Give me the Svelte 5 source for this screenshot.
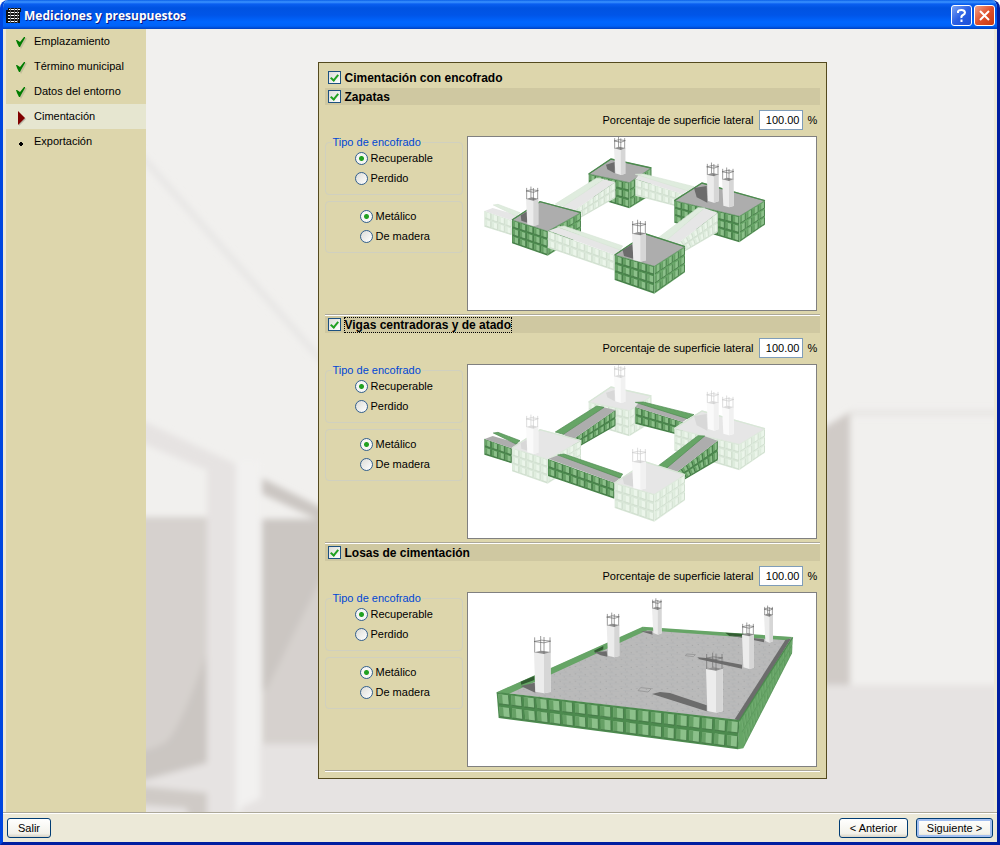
<script>
  const steps = [
    { name: "Emplazamiento", state: "done" },
    { name: "Término municipal", state: "done" },
    { name: "Datos del entorno", state: "done" },
    { name: "Cimentación", state: "current" },
    { name: "Exportación", state: "pending" },
  ];

  let allEnabled = true;
  let sections = [
    { id: "zapatas", title: "Zapatas", drawing: "footings" },
    { id: "vigas", title: "Vigas centradoras y de atado", drawing: "beams" },
    { id: "losas", title: "Losas de cimentación", drawing: "slab" },
  ].map((s) => ({
    ...s,
    enabled: true,
    percent: "100.00",
    type: "recuperable",
    material: "metalico",
  }));

  const pts = (list) => list.map((p) => p.join(",")).join(" ");

  const mix = (a, b, t) => [a[0] + (b[0] - a[0]) * t, a[1] + (b[1] - a[1]) * t];

  // Splits a quad (top left, top right, bottom right, bottom left) into inset panels
  function panels(quad, cols, rows) {
    const [a, b, c, d] = quad;
    const at = (u, v) => mix(mix(a, b, u), mix(d, c, u), v);
    const out = [];
    for (let r = 0; r < rows; r++) {
      for (let i = 0; i < cols; i++) {
        const u0 = (i + 0.12) / cols;
        const u1 = (i + 0.92) / cols;
        const um = (i + 0.42) / cols;
        const v0 = (r + 0.1) / rows;
        const v1 = (r + 0.86) / rows;
        out.push({
          cell: pts([at(u0, v0), at(u1, v0), at(u1, v1), at(u0, v1)]),
          dark: pts([at(u0, v0), at(um, v0), at(um, v1), at(u0, v1)]),
          edge: pts([at(u0, v1), at(u1, v1), at(u1, v0)]),
        });
      }
    }
    return out;
  }

  const footing = (top, left, right, cols, shadow) => ({ kind: "footing", top, left, right, cols, shadow });
  const beam = (rim, deck, side, cols) => ({ kind: "beam", rim, deck, side, cols });

  const frame = [
    footing(
      [[368, 120], [435, 75], [556, 102], [490, 146]],
      [[368, 120], [490, 146], [490, 223], [368, 186]],
      [[490, 146], [556, 102], [556, 182], [490, 223]],
      [6, 4],
      [[420, 92], [446, 84], [446, 118], [424, 106]]
    ),
    beam(
      [[268, 210], [392, 132], [414, 136], [292, 217]],
      [[290, 217], [412, 136], [448, 144], [318, 234]],
      [[318, 234], [448, 144], [448, 192], [318, 266]],
      8
    ),
    beam(
      [[508, 121], [532, 120], [684, 158], [664, 170]],
      [[508, 135], [518, 123], [670, 166], [650, 180]],
      [[508, 135], [650, 180], [650, 222], [508, 185]],
      7
    ),
    footing(
      [[625, 200], [708, 147], [897, 200], [820, 247]],
      [[625, 200], [820, 247], [820, 325], [625, 266]],
      [[820, 247], [897, 200], [897, 272], [820, 325]],
      [9, 4],
      [[684, 162], [722, 156], [724, 206], [692, 190]]
    ),
    beam(
      [[576, 312], [696, 221], [716, 222], [600, 320]],
      [[598, 320], [714, 222], [755, 236], [630, 332]],
      [[630, 332], [755, 236], [755, 295], [650, 356]],
      8
    ),
    beam(
      [[82, 213], [96, 211], [162, 236], [150, 246]],
      [[56, 231], [80, 222], [164, 246], [137, 259]],
      [[55, 230], [137, 259], [137, 304], [55, 278]],
      4
    ),
    footing(
      [[138, 258], [222, 203], [345, 236], [245, 292]],
      [[138, 258], [245, 292], [245, 365], [138, 328]],
      [[245, 292], [345, 236], [345, 302], [245, 365]],
      [5, 5],
      [[164, 244], [184, 232], [184, 266], [166, 260]]
    ),
    beam(
      [[275, 279], [294, 276], [470, 336], [462, 348]],
      [[248, 290], [276, 280], [466, 346], [445, 362]],
      [[246, 291], [445, 362], [445, 410], [246, 342]],
      9
    ),
    footing(
      [[446, 363], [540, 300], [657, 338], [565, 397]],
      [[446, 363], [565, 397], [565, 479], [446, 438]],
      [[565, 397], [657, 338], [657, 415], [565, 479]],
      [5, 5],
      [[470, 348], [500, 330], [502, 374], [474, 366]]
    ),
  ];

  const frameColumns = [
    { x: 444, y: 43, w: 34, h: 80 },
    { x: 722, y: 122, w: 36, h: 84 },
    { x: 768, y: 136, w: 35, h: 84 },
    { x: 180, y: 195, w: 37, h: 81 },
    { x: 498, y: 299, w: 42, h: 84 },
  ];

  const slabColumns = [
    { x: 558, y: 55, w: 29, h: 79 },
    { x: 894, y: 75, w: 27, h: 83 },
    { x: 422, y: 106, w: 38, h: 96 },
    { x: 828, y: 134, w: 36, h: 103 },
    { x: 204, y: 187, w: 50, h: 123 },
    { x: 720, y: 237, w: 50, h: 131 },
  ];

  const slabFront = panels([[92, 308], [820, 392], [816, 478], [98, 384]], 19, 2);
  const slabSide = panels([[822, 392], [980, 142], [978, 190], [834, 475]], 20, 2);
</script>

{#snippet column(c)}
  <polygon class="col-light" points="{c.x},{c.y} {c.x + c.w},{c.y - 1} {c.x + c.w},{c.y + c.h - 4} {c.x + c.w * 0.6},{c.y + c.h} {c.x + 4},{c.y + c.h - 5}" />
  <polygon class="col-dark" points="{c.x + c.w * 0.6},{c.y + 4} {c.x + c.w},{c.y - 1} {c.x + c.w},{c.y + c.h - 4} {c.x + c.w * 0.6},{c.y + c.h}" />
  <polygon class="col-top" points="{c.x},{c.y} {c.x + c.w * 0.45},{c.y - 5} {c.x + c.w},{c.y - 1} {c.x + c.w * 0.6},{c.y + 5}" />
  <path
    class="rebar"
    d="M{c.x + 2} {c.y}v{-c.w * 0.9} M{c.x + c.w * 0.4} {c.y - 4}v{-c.w * 0.9} M{c.x + c.w * 0.6} {c.y + 4}v{-c.w} M{c.x + c.w - 2} {c.y}v{-c.w * 0.9} M{c.x} {c.y - c.w * 0.65}l{c.w * 0.45} -4 {c.w * 0.55} 3 {-c.w * 0.4} 5z"
  />
{/snippet}

{#snippet grid(list)}
  {#each list as p}
    <polygon class="cell" points={p.cell} />
    <polygon class="cell-dark" points={p.dark} />
    <polyline class="cell-edge" points={p.edge} />
  {/each}
{/snippet}

{#snippet frameDrawing(active)}
  <svg class="drawing" viewBox="6 9 1044 519" role="img" aria-label="Encofrado">
    {#each frame as part}
      <g class={part.kind === active ? "solid" : "pale"}>
        {#if part.kind === "footing"}
          <polygon class="panel" points={pts(part.left)} />
          {@render grid(panels(part.left, part.cols[0], 3))}
          <polygon class="panel shade" points={pts(part.right)} />
          {@render grid(panels(part.right, part.cols[1], 3))}
          <polygon class="deck rim" points={pts(part.top)} />
          <polyline class="lip" points={pts([part.top[0], part.top[1], part.top[2]])} />
          <polygon class="shadow" points={pts(part.shadow)} />
        {:else}
          <polygon class="panel" points={pts(part.side)} />
          {@render grid(panels(part.side, part.cols, 2))}
          <polygon class="deck" points={pts(part.deck)} />
          <polygon class="shade rim" points={pts(part.rim)} />
        {/if}
      </g>
    {/each}
    <g class={active === "footing" ? "solid" : "pale"}>
      {#each frameColumns as c}
        {@render column(c)}
      {/each}
    </g>
  </svg>
{/snippet}

{#snippet slabDrawing()}
  <svg class="drawing" viewBox="6 9 1044 519" role="img" aria-label="Encofrado de losa">
    <defs>
      <pattern id="grain" width="46" height="22" patternUnits="userSpaceOnUse">
        <rect width="46" height="22" fill="#bababa" />
        <path d="M0 4l30 3M12 15l34 3" stroke="#b2b4b6" stroke-width="2" />
        <path d="M5 10h3M22 3h2M34 12h3M17 19h2" stroke="#929292" stroke-width="2" />
      </pattern>
    </defs>
    <g class="solid">
      <polygon points="95,306 530,112 978,142 820,392" fill="url(#grain)" />
      <polygon class="shade" points="92,307 530,110 545,120 128,312" />
      <polygon class="shadow-green" points="384,182 412,168 412,178 388,189" />
      <polygon class="shadow-green" points="164,275 205,258 205,270 166,284" />
      <polygon class="shade" points="530,110 980,141 962,151 540,121" />
      <polygon class="shadow-green" points="778,128 838,132 838,140 790,138" />
      <polygon class="shadow" points="958,150 976,145 822,392 806,388" />
      <polygon class="shadow" points="524,124 558,124 560,134" />
      <polygon class="shadow" points="384,186 422,184 424,200 404,196" />
      <polygon class="shadow" points="164,288 206,278 208,308 190,300" />
      <polygon class="shadow" points="694,202 720,204 828,224 828,236 700,208" />
      <polygon class="shadow" points="788,136 894,148 894,157 862,150" />
      <polygon class="shadow" points="558,312 582,306 612,309 722,346 722,364" />
      <path class="outline" d="M524 293l32 3-10 10-30-4zM662 192l26 2-6 6-24-3z" />
      <polygon class="shade" points="820,392 980,142 978,190 832,475 815,478" />
      <g opacity="0.3">{@render grid(slabSide)}</g>
      <polygon class="panel" points="92,308 820,392 816,478 98,384" />
      {@render grid(slabFront)}
      <polyline class="lip" points="92,308 820,392 980,142" />
      {#each slabColumns as c}
        {@render column(c)}
      {/each}
    </g>
  </svg>
{/snippet}

<div class="window">
  <header class="titlebar">
    <svg class="logo" viewBox="0 0 15 15" aria-hidden="true">
      <path d="M2 0h13v4h-1v11H0V2h2z" fill="#111" />
      <path d="M3 1.500h11M2 4.500h11M2 7.500h11M2 10.500h11M2 13.500h10" stroke="#fff" />
      <path d="M4.500 0v15M8.500 0v15M11.500 0v15" stroke="#555" />
    </svg>
    <h1>Mediciones y presupuestos</h1>
    <button class="caption help" aria-label="Ayuda">
      <svg viewBox="0 0 19 19"><path d="M6 7V5.500Q6.500 4 9.500 4T13 6.500Q13 8 11 9T9.500 12M9.500 13.500v2.500" /></svg>
    </button>
    <button class="caption close" aria-label="Cerrar">
      <svg viewBox="0 0 19 19"><path d="M5 5l9 9M14 5l-9 9" /></svg>
    </button>
  </header>

  <div class="body">
    <nav class="steps">
      {#each steps as step}
        <a href="#{step.state}" class={["step", step.state].join(" ")}>
          <svg viewBox="0 0 16 16" aria-hidden="true">
            {#if step.state === "done"}
              <path d="M5 7l3 5 5-9" fill="none" stroke="#c3be9a" stroke-width="2" />
              <path d="M3 5h1l3 2 4-5h1v1L8 10l-1 2H6L4 8z" fill="#007c00" />
            {:else if step.state === "current"}
              <path d="M6 3l7 6-7 7z" fill="#b9b9a8" />
              <path d="M5 1l7 7-7 7z" fill="#800000" />
            {:else}
              <path d="M6 9h4M8 7v4" stroke="#000" stroke-width="2" />
            {/if}
          </svg>
          <span>{step.name}</span>
        </a>
      {/each}
    </nav>

    <main>
      <svg class="backdrop" viewBox="146 29 848 783" preserveAspectRatio="none" aria-hidden="true">
        <filter id="soft" x="-5%" y="-5%" width="110%" height="110%">
          <feGaussianBlur stdDeviation="3" />
        </filter>
        <g filter="url(#soft)">
          <path d="M136 150L330 370" fill="none" stroke="#e7e6e5" stroke-width="6" />
          <path d="M130 415L236 464V470L204 469L130 438z" fill="#e6e3e2" />
          <path d="M130 517H208V765L130 785z" fill="#d6d1ce" />
          <path d="M206 655Q180 730 166 742Q150 752 130 752V784L208 762z" fill="#cbc6c2" />
          <path d="M130 784L208 763V820H130z" fill="#e6e3e2" />
          <path d="M130 785L208 793V820H190L186 808L130 804z" fill="#cfcac6" />
          <path d="M262 478L330 512V525L262 494z" fill="#cbc6c2" />
          <path d="M262 519H330V745H262z" fill="#d6d1ce" />
          <path d="M262 519H330V560L266 690H262z" fill="#cbc6c2" />
          <path d="M255 744H820V685H1010V830H236z" fill="#e6e3e2" />
          <path d="M207 468H236V820H207z" fill="#e6e3e2" />
          <path d="M236 460H260V798L236 810z" fill="#f2f1f0" />
          <path d="M820 430L850 412V685H820z" fill="#d0cbc7" />
          <path d="M850 413H1010" stroke="#e6e4e2" stroke-width="5" />
        </g>
      </svg>

      <form class="card">
        <label class="check heading">
          <input type="checkbox" bind:checked={allEnabled} />
          <span>Cimentación con encofrado</span>
        </label>

        {#each sections as section}
          <section>
            <label class="check bar">
              <input type="checkbox" bind:checked={section.enabled} />
              <span class={section.id === "vigas" ? "focused" : ""}>{section.title}</span>
            </label>

            <div class="percent">
              <label for="percent-{section.id}">Porcentaje de superficie lateral</label>
              <input id="percent-{section.id}" type="text" bind:value={section.percent} />
              <span>%</span>
            </div>

            <div class="options">
              <div class="groups">
                <fieldset class="type">
                  <legend>Tipo de encofrado</legend>
                  <label><input type="radio" value="recuperable" bind:group={section.type} />Recuperable</label>
                  <label><input type="radio" value="perdido" bind:group={section.type} />Perdido</label>
                </fieldset>
                <fieldset class="material">
                  <label><input type="radio" value="metalico" bind:group={section.material} />Metálico</label>
                  <label><input type="radio" value="madera" bind:group={section.material} />De madera</label>
                </fieldset>
              </div>
              <div class="preview">
                {#if section.drawing === "slab"}
                  {@render slabDrawing()}
                {:else}
                  {@render frameDrawing(section.drawing === "beams" ? "beam" : "footing")}
                {/if}
              </div>
            </div>
          </section>
        {/each}
      </form>
    </main>
  </div>

  <footer>
    <button class="push">Salir</button>
    <div class="spacer"></div>
    <button class="push wide">&lt; Anterior</button>
    <button class="push wide default">Siguiente &gt;</button>
  </footer>
</div>

<style>
  :global(body) {
    background: #fff;
  }

  .window {
    box-sizing: border-box;
    display: flex;
    flex-direction: column;
    min-height: 100vh;
    border: 3px solid #0046e0;
    border-top: 0;
    border-color: #0046e0 #001ea0 #001ea0 #0046e0;
    border-radius: 8px 8px 0 0;
    background: #ece9d8;
    color: #000;
    font-family: "Liberation Sans", Arial, sans-serif;
    font-size: 11px;
    line-height: 14px;
    overflow: hidden;
  }

  button,
  input {
    font: inherit;
    color: inherit;
  }

  .titlebar {
    display: flex;
    align-items: center;
    gap: 2px;
    height: 29px;
    margin: 0 -3px;
    padding: 2px 5px 0 6px;
    box-sizing: border-box;
    background: linear-gradient(#0a5fe8 0, #3c94ff 2px, #0a5ff0 4px, #0053e1 8px, #0055e8 15px, #0066ff 22px, #0062f8 26px, #0040c0 29px);
  }

  .logo {
    width: 15px;
    height: 15px;
  }

  h1 {
    flex: 1;
    margin: 0 0 0 1px;
    color: #fff;
    font-family: "Open Sans", sans-serif;
    font-size: 12px;
    line-height: 18px;
    text-shadow: 1px 1px 0 #0a1883;
  }

  .caption {
    width: 21px;
    height: 21px;
    padding: 0;
    border: 1px solid #fff;
    border-radius: 3px;
  }

  .caption svg {
    display: block;
    width: 19px;
    height: 19px;
    fill: none;
    stroke: #fff;
    stroke-width: 2;
  }

  .help {
    background: linear-gradient(135deg, #7da4f4, #2a5fe4 50%, #1d51d8);
  }

  .close {
    background: linear-gradient(135deg, #f0a188, #e0502c 50%, #c8390f);
  }

  .body {
    display: flex;
    flex: 1;
    padding: 0 3px;
  }

  .steps {
    flex: 0 0 140px;
    background: #ddd6ac;
  }

  .step {
    display: flex;
    gap: 5px;
    height: 25px;
    padding-left: 7px;
    box-sizing: border-box;
    color: #000;
    text-decoration: none;
  }

  .step svg {
    width: 16px;
    height: 16px;
    margin-top: 6px;
  }

  .step span {
    margin-top: 5px;
  }

  .current {
    background: #e6e6d0;
  }

  main {
    position: relative;
    flex: 1;
    padding: 33px 20px 33px 24px;
    background: #f1f0ee;
  }

  .backdrop {
    position: absolute;
    inset: 0;
    width: 100%;
    height: 100%;
  }

  .card {
    position: relative;
    box-sizing: border-box;
    max-width: 509px;
    margin: 0 auto;
    padding: 6px;
    border: 1px solid #544a1e;
    background: #ddd6ac;
  }

  .check {
    display: flex;
    align-items: center;
    gap: 4px;
    height: 17px;
    padding-left: 3px;
    font-size: 12px;
    font-weight: bold;
  }

  .heading {
    margin-bottom: 2px;
  }

  .bar {
    background: #cfc8a1;
  }

  .focused {
    outline: 1px dotted #000;
  }

  input[type="checkbox"] {
    appearance: none;
    width: 13px;
    height: 13px;
    margin: 0;
    border: 1px solid #1c5180;
    background: linear-gradient(135deg, #dcdcd7, #fff);
  }

  input[type="checkbox"]:checked::before {
    content: "";
    display: block;
    width: 3px;
    height: 6px;
    margin: 1px 0 0 3px;
    border: solid #21a121;
    border-width: 0 2px 2px 0;
    transform: rotate(40deg);
  }

  section {
    padding-bottom: 4px;
    border-bottom: 1px solid #fff;
    box-shadow: inset 0 -1px #aca899;
  }

  .percent {
    display: flex;
    align-items: center;
    justify-content: flex-end;
    gap: 5px;
    padding: 5px 2px 6px 0;
  }

  .percent span {
    width: 10px;
  }

  .percent input {
    box-sizing: border-box;
    width: 44px;
    height: 20px;
    padding: 0 2px;
    border: 1px solid #7f9db9;
    background: #fff;
    text-align: right;
  }

  .options {
    display: flex;
    gap: 4px;
    padding-right: 3px;
  }

  .groups {
    flex: 1;
  }

  fieldset {
    display: flex;
    flex-direction: column;
    gap: 6px;
    margin: 0;
    min-width: 0;
    box-sizing: border-box;
    border: 1px solid #d0d0bf;
    border-radius: 4px;
  }

  legend {
    padding: 0 1px;
    color: #0046d5;
    line-height: 12px;
  }

  .type {
    height: 59px;
    padding: 3px 6px 0;
  }

  .type label {
    padding-left: 23px;
  }

  .material {
    height: 52px;
    margin-top: 6px;
    padding: 7px 6px 0;
  }

  .material label {
    padding-left: 28px;
  }

  fieldset label {
    display: flex;
    align-items: center;
    gap: 3px;
  }

  input[type="radio"] {
    appearance: none;
    width: 13px;
    height: 13px;
    margin: 0;
    border: 1px solid #33608f;
    border-radius: 50%;
    background: linear-gradient(135deg, #dcdcd7, #fff);
  }

  input[type="radio"]:checked {
    background: radial-gradient(circle, #21a121 0 2px, #f6f6f4 3px);
  }

  .preview {
    box-sizing: border-box;
    width: 350px;
    max-width: 75%;
    border: 1px solid #808080;
    background: #fff;
  }

  .drawing {
    display: block;
    width: 100%;
  }

  .solid {
    --panel: #4c8a4e;
    --shade: #66a566;
    --cell: #8cc08a;
    --cell-dark: #66a065;
    --edge: #3a6b3c;
    --deck: #adadad;
    --shadow: #6c6c6c;
    --col-light: #ececec;
    --col-dark: #d6d6d6;
    --col-top: #8f8f8f;
    --rebar: #6a6a6a;
  }

  .pale {
    --panel: #d8e6d7;
    --shade: #dfecde;
    --cell: #ebf5ea;
    --cell-dark: #deecdd;
    --edge: #c8d8c7;
    --deck: #e6e6e6;
    --shadow: #d8d8d8;
    --col-light: #fafafa;
    --col-dark: #f1f1f1;
    --col-top: #dcdcdc;
    --rebar: #cccccc;
  }

  .panel {
    fill: var(--panel);
  }

  .shade {
    fill: var(--shade);
  }

  .cell {
    fill: var(--cell);
  }

  .cell-dark {
    fill: var(--cell-dark);
  }

  .cell-edge {
    fill: none;
    stroke: var(--edge);
    stroke-width: 2;
  }

  .deck {
    fill: var(--deck);
  }

  .rim {
    stroke: var(--panel);
    stroke-width: 2;
  }

  .lip {
    fill: none;
    stroke: var(--panel);
    stroke-width: 4;
  }

  .shadow {
    fill: var(--shadow);
  }

  .shadow-green {
    fill: #315c31;
  }

  .outline {
    fill: none;
    stroke: #8c8c8c;
    stroke-width: 2;
  }

  .col-light {
    fill: var(--col-light);
  }

  .col-dark {
    fill: var(--col-dark);
  }

  .col-top {
    fill: var(--col-top);
  }

  .rebar {
    fill: none;
    stroke: var(--rebar);
    stroke-width: 2;
  }

  footer {
    display: flex;
    align-items: center;
    gap: 8px;
    height: 29px;
    padding: 0 4px;
    border-top: 1px solid #aca899;
    box-shadow: inset 0 1px #fff;
  }

  .spacer {
    flex: 1;
  }

  .push {
    min-width: 44px;
    height: 20px;
    padding: 0 8px;
    border: 1px solid #003c74;
    border-radius: 3px;
    background: linear-gradient(#fff, #f3f2ea 80%, #d8d2c4);
  }

  .wide {
    min-width: 69px;
  }

  .default {
    min-width: 77px;
    box-shadow: inset 0 0 0 2px #a3bff0;
  }
</style>
